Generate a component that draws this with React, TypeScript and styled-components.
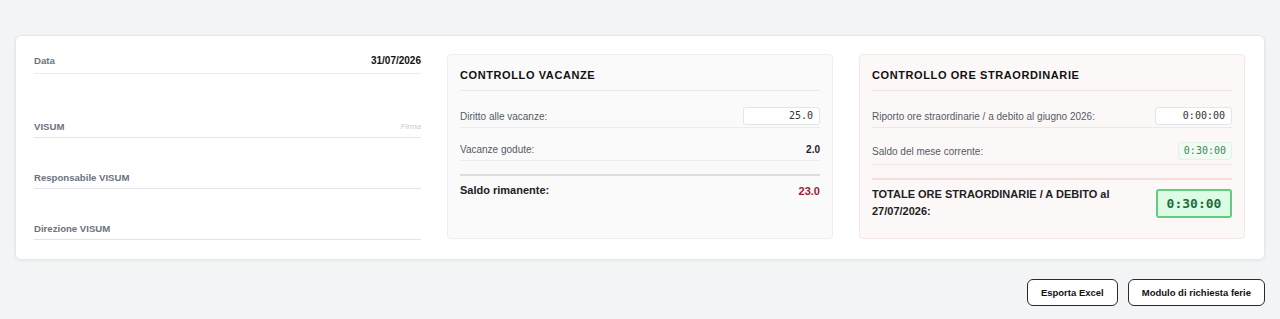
import * as React from "react";
import styled, { createGlobalStyle } from "styled-components";

const GlobalStyle = createGlobalStyle`
  html, body {
    margin: 0;
    padding: 0;
    background: #f3f4f6;
    font-family: "Liberation Sans", Arial, sans-serif;
    color: #1f2937;
  }
`;

const Page = styled.div`
  padding: 35px 15px 0;
  box-sizing: border-box;
  width: 1280px;
  height: 319px;
`;

const Card = styled.div`
  background: #ffffff;
  border: 1px solid #e6e7ea;
  border-radius: 6px;
  box-shadow: 0 1px 3px rgba(0, 0, 0, 0.06);
  padding: 18px 19px 19px 18px;
  display: grid;
  grid-template-columns: 387px 386px 386px;
  column-gap: 26px;
  align-items: start;
`;

const SignColumn = styled.div`
  display: flex;
  flex-direction: column;
`;

const DataRow = styled.div`
  display: flex;
  justify-content: space-between;
  align-items: center;
  line-height: 13px;
  padding-bottom: 6px;
  border-bottom: 1px solid #ebecef;
`;

const FieldLabel = styled.span`
  font-size: 9.6px;
  font-weight: 700;
  color: #6b7280;
`;

const DateValue = styled.span`
  font-size: 10px;
  font-weight: 700;
  color: #111;
`;

const SignatureList = styled.div`
  padding-top: 13px;
  display: flex;
  flex-direction: column;
`;

const SignatureRow = styled.div`
  height: 50px;
  display: flex;
  justify-content: space-between;
  align-items: flex-end;
  padding-bottom: 3px;
  box-sizing: border-box;
  border-bottom: 1px solid #e3e4e8;
  line-height: 14px;
  height: 51px;
`;

const Hint = styled.span`
  font-size: 8px;
  font-style: italic;
  color: #c9cbd0;
`;

const Panel = styled.div<{ $tone: "grey" | "pink" }>`
  background: ${(p) => (p.$tone === "pink" ? "#fdf8f8" : "#fafafb")};
  border: 1px solid ${(p) => (p.$tone === "pink" ? "#f5e8e8" : "#eeeef0")};
  border-radius: 4px;
  padding: 12px 12px 0;
  height: 185px;
  box-sizing: border-box;
`;

const PanelTitle = styled.div<{ $tone: "grey" | "pink" }>`
  font-size: 11px;
  font-weight: 700;
  letter-spacing: 0.6px;
  color: #111;
  line-height: 16px;
  padding-bottom: 7px;
  margin-bottom: 4px;
  border-bottom: 1px solid ${(p) => (p.$tone === "pink" ? "#f3e4e4" : "#e9e9ec")};
`;

const Row = styled.div<{ $tone: "grey" | "pink"; $min?: number }>`
  display: flex;
  justify-content: space-between;
  align-items: center;
  min-height: ${(p) => p.$min ?? 18}px;
  padding: 12px 0 2px;
  border-bottom: 1px solid ${(p) => (p.$tone === "pink" ? "#f6e3e3" : "#ececef")};
`;

const RowLabel = styled.span`
  font-size: 10px;
  color: #555b63;
`;

const RowValue = styled.span`
  font-size: 10px;
  font-weight: 700;
  color: #1f2024;
`;

const NumberBox = styled.div<{ $width: number }>`
  width: ${(p) => p.$width}px;
  height: 18px;
  box-sizing: border-box;
  background: #fff;
  border: 1px solid #e4e5e8;
  border-radius: 3px;
  font-family: "DejaVu Sans Mono", "Liberation Mono", monospace;
  font-size: 10px;
  color: #333;
  text-align: right;
  padding: 0 6px;
  line-height: 16px;
`;

const GreenChip = styled.div`
  height: 18px;
  box-sizing: border-box;
  background: #f1faf3;
  border: 1px solid #e2f3e6;
  border-radius: 3px;
  font-family: "DejaVu Sans Mono", "Liberation Mono", monospace;
  font-size: 10px;
  color: #3d8a57;
  padding: 0 5px;
  line-height: 16px;
`;

const TotalRow = styled.div<{ $tone: "grey" | "pink" }>`
  margin-top: 13px;
  border-top: 2px solid ${(p) => (p.$tone === "pink" ? "#f5dede" : "#dcdde2")};
  padding-top: 6px;
  display: flex;
  justify-content: space-between;
  align-items: center;
  gap: 16px;
`;

const TotalLabel = styled.span`
  font-size: 11px;
  font-weight: 700;
  color: #1f2024;
  line-height: 17px;
`;

const Balance = styled.span`
  font-size: 11px;
  font-weight: 700;
  color: #9b1b30;
`;

const TotalChip = styled.div`
  flex: none;
  width: 76px;
  height: 29px;
  box-sizing: border-box;
  background: #dcfce5;
  border: 2px solid #5fce7d;
  border-radius: 3px;
  font-family: "DejaVu Sans Mono", "Liberation Mono", monospace;
  font-size: 13px;
  font-weight: 700;
  color: #246b3c;
  display: flex;
  align-items: center;
  justify-content: center;
`;

const Actions = styled.div`
  display: flex;
  justify-content: flex-end;
  gap: 10px;
  margin-top: 19px;
`;

const Button = styled.button`
  height: 27px;
  padding: 0 13px;
  background: #fff;
  border: 1px solid #2a2a2a;
  border-radius: 6px;
  font-family: "Liberation Sans", Arial, sans-serif;
  font-size: 9.5px;
  font-weight: 700;
  color: #111;
`;

const signatures = ["VISUM", "Responsabile VISUM", "Direzione VISUM"];

export default function App() {
  return (
    <Page>
      <GlobalStyle />
      <Card>
        <SignColumn>
          <DataRow>
            <FieldLabel>Data</FieldLabel>
            <DateValue>31/07/2026</DateValue>
          </DataRow>
          <SignatureList>
            {signatures.map((s, i) => (
              <SignatureRow key={s}>
                <FieldLabel>{s}</FieldLabel>
                {i === 0 && <Hint>Firma</Hint>}
              </SignatureRow>
            ))}
          </SignatureList>
        </SignColumn>

        <Panel $tone="grey">
          <PanelTitle $tone="grey">CONTROLLO VACANZE</PanelTitle>
          <Row $tone="grey">
            <RowLabel>Diritto alle vacanze:</RowLabel>
            <NumberBox $width={77}>25.0</NumberBox>
          </Row>
          <Row $tone="grey">
            <RowLabel>Vacanze godute:</RowLabel>
            <RowValue>2.0</RowValue>
          </Row>
          <TotalRow $tone="grey">
            <TotalLabel>Saldo rimanente:</TotalLabel>
            <Balance>23.0</Balance>
          </TotalRow>
        </Panel>

        <Panel $tone="pink">
          <PanelTitle $tone="pink">CONTROLLO ORE STRAORDINARIE</PanelTitle>
          <Row $tone="pink">
            <RowLabel>Riporto ore straordinarie / a debito al giugno 2026:</RowLabel>
            <NumberBox $width={77}>0:00:00</NumberBox>
          </Row>
          <Row $tone="pink" $min={22}>
            <RowLabel>Saldo del mese corrente:</RowLabel>
            <GreenChip>0:30:00</GreenChip>
          </Row>
          <TotalRow $tone="pink">
            <TotalLabel>TOTALE ORE STRAORDINARIE / A DEBITO al 27/07/2026:</TotalLabel>
            <TotalChip>0:30:00</TotalChip>
          </TotalRow>
        </Panel>
      </Card>
      <Actions>
        <Button>Esporta Excel</Button>
        <Button>Modulo di richiesta ferie</Button>
      </Actions>
    </Page>
  );
}
